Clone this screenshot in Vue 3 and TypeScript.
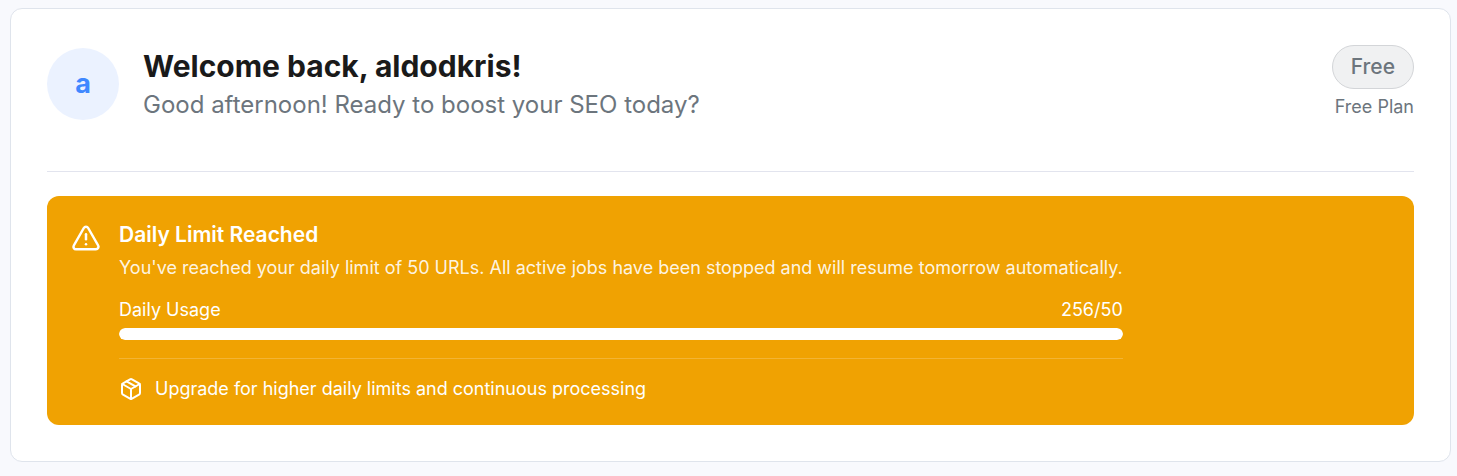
<script setup lang="ts">
import { computed } from 'vue'

const user = 'aldodkris'
const plan = 'Free'
const used = 256
const limit = 50
const usageWidth = computed(() => `${Math.min(100, (used / limit) * 100)}%`)
</script>

<template>
  <main class="page">
    <section class="card">
      <header class="header">
        <div class="avatar" aria-hidden="true">{{ user[0] }}</div>
        <div class="greeting">
          <h1>Welcome back, {{ user }}!</h1>
          <p>Good afternoon! Ready to boost your SEO today?</p>
        </div>
        <div class="plan">
          <span class="badge">{{ plan }}</span>
          <span class="plan-name">{{ plan }} Plan</span>
        </div>
      </header>

      <div class="alert" role="alert">
        <svg class="alert-icon" viewBox="0 0 24 24" aria-hidden="true">
          <path d="m21.73 18-8-14a2 2 0 0 0-3.48 0l-8 14A2 2 0 0 0 4 21h16a2 2 0 0 0 1.73-3Z" />
          <path d="M12 9v4" />
          <path d="M12 17h.01" />
        </svg>
        <div class="alert-body">
          <h2>Daily Limit Reached</h2>
          <p class="description">
            You've reached your daily limit of {{ limit }} URLs. All active jobs have been stopped and will resume tomorrow automatically.
          </p>
          <div class="usage">
            <span id="usage-label">Daily Usage</span>
            <span>{{ used }}/{{ limit }}</span>
          </div>
          <div
            class="track"
            role="progressbar"
            aria-labelledby="usage-label"
            aria-valuemin="0"
            :aria-valuemax="limit"
            :aria-valuenow="limit"
          >
            <div class="fill" :style="{ width: usageWidth }"></div>
          </div>
          <div class="upgrade">
            <svg class="package-icon" viewBox="0 0 24 24" aria-hidden="true">
              <path d="M11 21.73a2 2 0 0 0 2 0l7-4A2 2 0 0 0 21 16V8a2 2 0 0 0-1-1.73l-7-4a2 2 0 0 0-2 0l-7 4A2 2 0 0 0 3 8v8a2 2 0 0 0 1 1.73z" />
              <path d="M12 22V12" />
              <path d="m3.3 7 8.7 5 8.7-5" />
              <path d="m7.5 4.27 9 5.15" />
            </svg>
            <span>Upgrade for higher daily limits and continuous processing</span>
          </div>
        </div>
      </div>
    </section>
  </main>
</template>

<style>
body {
  margin: 0;
  background: #f8f9fd;
}
</style>

<style scoped>
.page {
  padding: 8px 6px 14px 10px;
  font-family: Inter, 'Liberation Sans', sans-serif;
}

.card {
  padding: 36px;
  border: 1px solid #dfe4ec;
  border-radius: 12px;
  background: #fff;
}

h1,
h2,
p {
  margin: 0;
}

.header {
  display: flex;
  align-items: center;
  gap: 24px;
  min-height: 78px;
  padding-bottom: 48px;
  border-bottom: 1px solid #e2e4ee;
}

.avatar {
  display: flex;
  align-items: center;
  justify-content: center;
  flex: none;
  width: 72px;
  height: 72px;
  border-radius: 50%;
  background: #ebf2ff;
  color: #3f88ff;
  font-size: 27px;
  font-weight: 700;
  line-height: 36px;
}

.greeting {
  flex: 1;
}

h1 {
  color: #1a1a1a;
  font-size: 30px;
  font-weight: 700;
  line-height: 42px;
}

.greeting p {
  color: #6c757d;
  font-size: 24px;
  line-height: 36px;
}

.plan {
  display: flex;
  flex-direction: column;
  align-items: flex-end;
  gap: 6px;
  align-self: flex-start;
  color: #6c757d;
}

.badge {
  padding: 6px 18px;
  border: 1px solid #d3d5d8;
  border-radius: 22px;
  background: #f0f1f2;
  font-size: 21px;
  font-weight: 500;
  line-height: 30px;
}

.plan-name {
  font-size: 18px;
  line-height: 24px;
}

.alert {
  display: flex;
  align-items: flex-start;
  gap: 18px;
  margin-top: 24px;
  padding: 24px;
  border-radius: 12px;
  background: #f0a202;
  color: #fff;
  font-size: 18px;
  line-height: 24px;
}

svg {
  flex: none;
  fill: none;
  stroke: currentColor;
  stroke-width: 2;
  stroke-linecap: round;
  stroke-linejoin: round;
}

.alert-icon {
  width: 30px;
  height: 30px;
  margin-top: 3px;
}

h2 {
  font-size: 21px;
  font-weight: 600;
  line-height: 30px;
}

.description {
  margin-top: 6px;
  color: rgba(255, 255, 255, 0.9);
}

.usage {
  display: flex;
  justify-content: space-between;
  margin-top: 18px;
}

.track {
  height: 12px;
  margin-top: 6px;
  border-radius: 6px;
  background: rgba(255, 255, 255, 0.2);
  overflow: hidden;
}

.fill {
  height: 100%;
  border-radius: 6px;
  background: #fff;
}

.upgrade {
  display: flex;
  align-items: center;
  gap: 12px;
  margin-top: 18px;
  padding-top: 18px;
  border-top: 1px solid rgba(255, 255, 255, 0.2);
}

.package-icon {
  width: 24px;
  height: 24px;
}
</style>
